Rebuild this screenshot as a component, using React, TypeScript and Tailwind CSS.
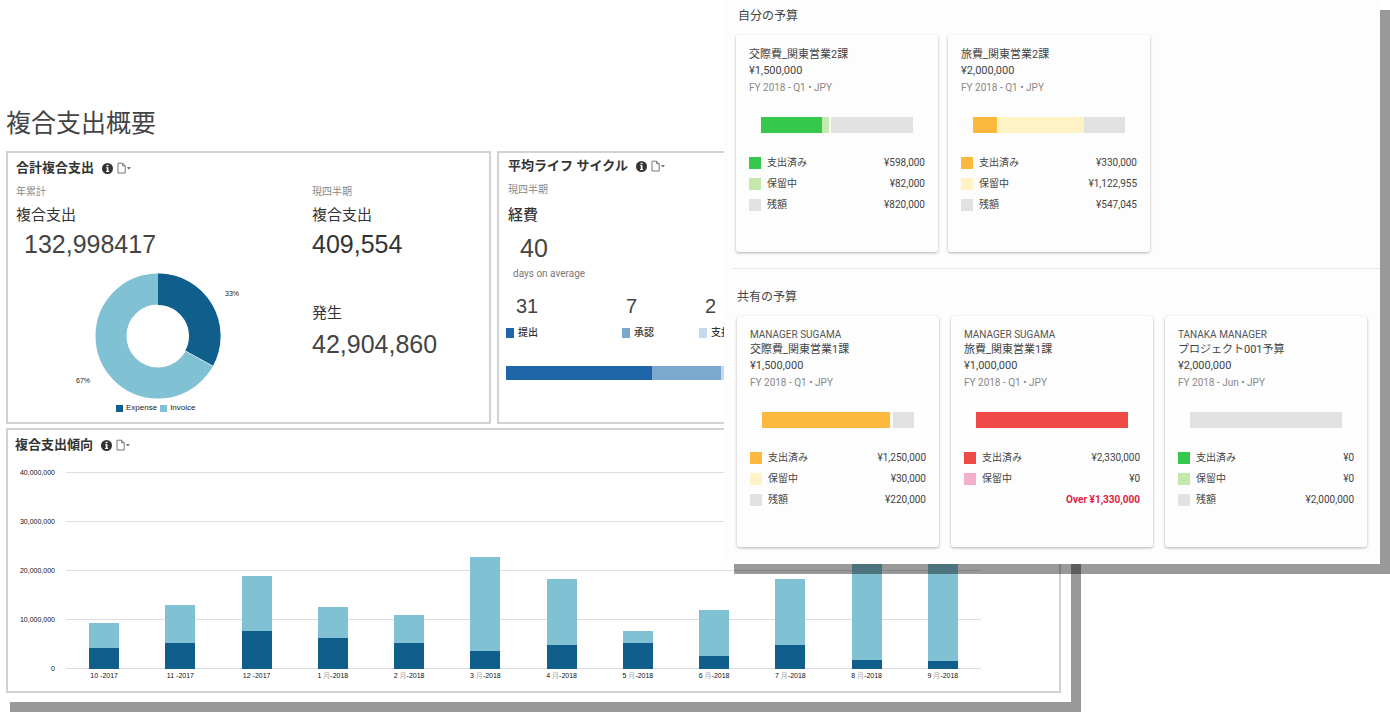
import React from "react";

type Swatch = "green" | "lightGreen" | "orange" | "yellow" | "red" | "pink" | "gray" | "blank";

const swatchClass: Record<Swatch, string> = {
  green: "bg-[#36c84b]",
  lightGreen: "bg-[#c4e9ac]",
  orange: "bg-[#fcb93e]",
  yellow: "bg-[#fdf3c4]",
  red: "bg-[#ee4b48]",
  pink: "bg-[#f4b0cb]",
  gray: "bg-[#e1e1e2]",
  blank: "bg-[#fdfcf4]",
};

interface Budget {
  owner?: string;
  name: string;
  amount: string;
  period: string;
  bar: { color: Swatch; share: number }[];
  rows: { color: Swatch; label: string; value: string }[];
  over?: string;
}

const myBudgets: Budget[] = [
  {
    name: "交際費_関東営業2課",
    amount: "¥1,500,000",
    period: "FY 2018 - Q1 • JPY",
    bar: [
      { color: "green", share: 40 },
      { color: "lightGreen", share: 5 },
      { color: "blank", share: 1 },
      { color: "gray", share: 54 },
    ],
    rows: [
      { color: "green", label: "支出済み", value: "¥598,000" },
      { color: "lightGreen", label: "保留中", value: "¥82,000" },
      { color: "gray", label: "残額", value: "¥820,000" },
    ],
  },
  {
    name: "旅費_関東営業2課",
    amount: "¥2,000,000",
    period: "FY 2018 - Q1 • JPY",
    bar: [
      { color: "orange", share: 16 },
      { color: "yellow", share: 57 },
      { color: "gray", share: 27 },
    ],
    rows: [
      { color: "orange", label: "支出済み", value: "¥330,000" },
      { color: "yellow", label: "保留中", value: "¥1,122,955" },
      { color: "gray", label: "残額", value: "¥547,045" },
    ],
  },
];

const sharedBudgets: Budget[] = [
  {
    owner: "MANAGER SUGAMA",
    name: "交際費_関東営業1課",
    amount: "¥1,500,000",
    period: "FY 2018 - Q1 • JPY",
    bar: [
      { color: "orange", share: 84 },
      { color: "blank", share: 2 },
      { color: "gray", share: 14 },
    ],
    rows: [
      { color: "orange", label: "支出済み", value: "¥1,250,000" },
      { color: "yellow", label: "保留中", value: "¥30,000" },
      { color: "gray", label: "残額", value: "¥220,000" },
    ],
  },
  {
    owner: "MANAGER SUGAMA",
    name: "旅費_関東営業1課",
    amount: "¥1,000,000",
    period: "FY 2018 - Q1 • JPY",
    bar: [{ color: "red", share: 100 }],
    rows: [
      { color: "red", label: "支出済み", value: "¥2,330,000" },
      { color: "pink", label: "保留中", value: "¥0" },
    ],
    over: "Over ¥1,330,000",
  },
  {
    owner: "TANAKA MANAGER",
    name: "プロジェクト001予算",
    amount: "¥2,000,000",
    period: "FY 2018 - Jun • JPY",
    bar: [{ color: "gray", share: 100 }],
    rows: [
      { color: "green", label: "支出済み", value: "¥0" },
      { color: "lightGreen", label: "保留中", value: "¥0" },
      { color: "gray", label: "残額", value: "¥2,000,000" },
    ],
  },
];

// Monthly totals in millions.
const AXIS_MAX = 40;
const months = [
  { month: "10", year: "2017", expense: 4.2, invoice: 5.1 },
  { month: "11", year: "2017", expense: 5.3, invoice: 7.6 },
  { month: "12", year: "2017", expense: 7.7, invoice: 11.1 },
  { month: "1", year: "2018", expense: 6.3, invoice: 6.2 },
  { month: "2", year: "2018", expense: 5.2, invoice: 5.7 },
  { month: "3", year: "2018", expense: 3.6, invoice: 19.2 },
  { month: "4", year: "2018", expense: 4.9, invoice: 13.3 },
  { month: "5", year: "2018", expense: 5.2, invoice: 2.5 },
  { month: "6", year: "2018", expense: 2.7, invoice: 9.3 },
  { month: "7", year: "2018", expense: 4.9, invoice: 13.4 },
  { month: "8", year: "2018", expense: 1.8, invoice: 23.2 },
  { month: "9", year: "2018", expense: 1.7, invoice: 24.3 },
];

function CardTitle({ children }: { children: React.ReactNode }) {
  return (
    <div className="flex items-center gap-2">
      <h2 className="text-[13px] leading-5 font-bold text-[#333]">{children}</h2>
      <div className="flex items-center gap-1">
        <button type="button" aria-label="情報">
          <svg width="11" height="11" viewBox="0 0 11 11" className="block">
            <circle cx="5.5" cy="5.5" r="5.5" fill="#333" />
            <path d="M4.6 1.8h1.9v1.5H4.6zM4.1 4.2h2.4v3.7h.7V9H4V7.9h.8V5.2h-.7z" fill="#fff" />
          </svg>
        </button>
        <button type="button" aria-label="エクスポート">
          <svg width="15" height="12" viewBox="0 0 15 12" className="block">
            <path d="M1 1.2h4.6l2.6 2.6v7.2H1zM5.6 1.2v2.6h2.6" fill="#fff" stroke="#777" strokeWidth="1" />
            <path d="M9.8 5.3h4.2L11.9 7.3z" fill="#555" />
          </svg>
        </button>
      </div>
    </div>
  );
}

function Donut() {
  return (
    <svg width="180" height="128" viewBox="0 0 180 128" className="block" role="img" aria-label="Expense 33%, Invoice 67%">
      <circle cx="88" cy="64" r="47" fill="none" stroke="#80c1d3" strokeWidth="31" />
      <path d="M88 1.5A62.5 62.5 0 0 1 142.8 94.1L115.2 78.9A31 31 0 0 0 88 33z" fill="#0f5e8b" />
      <path d="M142.8 94.1L115.2 78.9" stroke="#d5ebf2" strokeWidth="1" />
      <text x="155" y="24" fontSize="7" fill="#222">33%</text>
      <text x="6" y="111" fontSize="7" fill="#222">67%</text>
    </svg>
  );
}

function StageColumn({ value, label, swatch, indent }: { value: string; label: string; swatch: string; indent: string }) {
  return (
    <div>
      <div className={`text-xl leading-6 text-[#444] ${indent}`}>{value}</div>
      <div className="mt-2 flex items-center gap-1">
        <span className={`h-2.5 w-2 ${swatch}`} />
        <span className="text-[10px] leading-[14px] font-medium text-[#333]">{label}</span>
      </div>
    </div>
  );
}

function TrendChart() {
  return (
    <div className="mt-[17px] mr-[78px] flex">
      <div className="-mt-1 -mb-1.5 flex h-[206px] w-[58px] shrink-0 flex-col justify-between pr-[11px] text-right text-[7px] leading-[10px] text-[#111]">
        <span>40,000,000</span>
        <span>30,000,000</span>
        <span>20,000,000</span>
        <span>10,000,000</span>
        <span>0</span>
      </div>
      <div className="min-w-0 flex-1">
        <div className="relative h-[197px]">
          <div className="absolute inset-0 flex flex-col justify-between">
            {[40, 30, 20, 10, 0].map((tick) => (
              <div key={tick} className="h-px bg-[#dedede]" />
            ))}
          </div>
          <div className="relative flex h-full">
            {months.map((m) => (
              <div key={m.month} className="flex h-full flex-1 flex-col items-center justify-end">
                <div className="w-[30px] bg-[#80c1d3]" style={{ height: `${(m.invoice / AXIS_MAX) * 100}%` }} />
                <div className="w-[30px] bg-[#0f5e8b]" style={{ height: `${(m.expense / AXIS_MAX) * 100}%` }} />
              </div>
            ))}
          </div>
        </div>
        <div className="mt-0.5 flex text-[7px] leading-[10px] text-[#111]">
          {months.map((m) => (
            <div key={m.month} className="flex-1 text-center whitespace-nowrap">
              {m.month} {m.year === "2018" && <span className="text-[#aaa]">月</span>}-{m.year}
            </div>
          ))}
        </div>
      </div>
    </div>
  );
}

function BudgetCard({ budget }: { budget: Budget }) {
  return (
    <article className="w-[202px] rounded-[3px] bg-[#fdfdfd] px-[13px] pt-3 pb-[37px] shadow-[0_1px_3px_rgba(0,0,0,0.3)]">
      {budget.owner && <div className="text-[10px] leading-[14px] text-[#555]">{budget.owner}</div>}
      <h3 className="text-[11px] leading-4 text-[#444]">{budget.name}</h3>
      <div className="text-[11px] leading-4 text-[#444]">{budget.amount}</div>
      <div className="text-[10px] leading-[18px] text-[#888]">{budget.period}</div>
      <div className="mx-3 mt-5 flex h-4">
        {budget.bar.map((part, i) => (
          <div key={i} className={swatchClass[part.color]} style={{ width: `${part.share}%` }} />
        ))}
      </div>
      <div className="mt-[19px] text-[10px] leading-[21px] text-[#444]">
        {budget.rows.map((row) => (
          <div key={row.label} className="flex items-center">
            <span className={`h-3 w-3 ${swatchClass[row.color]}`} />
            <span className="ml-1.5 flex-1">{row.label}</span>
            <span>{row.value}</span>
          </div>
        ))}
        {budget.over && <div className="text-right font-bold text-[#dc2444]">{budget.over}</div>}
      </div>
    </article>
  );
}

export default function App() {
  return (
    <div className="relative min-h-screen bg-white">
      <main className="mr-[319px] bg-white pt-[105px] pr-2.5 pb-[9px] pl-1.5 font-['Liberation_Sans','Noto_Sans_CJK_JP',sans-serif] shadow-[10px_10px_0_rgba(0,0,0,0.4)]">
        <h1 className="text-[25px] leading-9 text-[#444]">複合支出概要</h1>
        <div className="mt-2.5 grid grid-cols-[485fr_564fr] gap-x-1.5 gap-y-1">
          <section className="border-2 border-[#d2d2d2] px-2 pt-[5px] pb-[7px]">
            <CardTitle>合計複合支出</CardTitle>
            <div className="mt-1.5 flex">
              <div className="w-[296px] shrink-0">
                <div className="text-[10px] leading-4 text-[#888]">年累計</div>
                <div className="mt-1 text-[15px] leading-[22px] text-[#333]">複合支出</div>
                <div className="mt-0.5 pl-2 text-[25px] leading-8 text-[#444]">132,998417</div>
                <div className="mt-3 ml-[54px] w-[180px]">
                  <Donut />
                  <div className="mt-px ml-[46px] flex items-center text-[8px] leading-[14px] text-[#222]">
                    <span className="h-[7px] w-[7px] bg-[#0f5e8b]" />
                    <span className="ml-[3px]">Expense</span>
                    <span className="ml-[3px] h-[7px] w-[7px] bg-[#80c1d3]" />
                    <span className="ml-[3px]">Invoice</span>
                  </div>
                </div>
              </div>
              <div>
                <div className="text-[10px] leading-4 text-[#888]">現四半期</div>
                <div className="mt-1 text-[15px] leading-[22px] text-[#333]">複合支出</div>
                <div className="mt-0.5 text-[25px] leading-8 text-[#333]">409,554</div>
                <div className="mt-[42px] text-[15px] leading-[22px] text-[#333]">発生</div>
                <div className="mt-1 text-[25px] leading-8 text-[#444]">42,904,860</div>
              </div>
            </div>
          </section>

          <section className="overflow-hidden border-2 border-[#d2d2d2] px-[7px] pt-[3px]">
            <div className="pl-0.5">
              <CardTitle>平均ライフ サイクル</CardTitle>
              <div className="mt-1.5 text-[10px] leading-4 text-[#888]">現四半期</div>
              <div className="mt-1.5 text-[15px] leading-[22px] font-medium text-[#333]">経費</div>
              <div className="mt-1.5 pl-3 text-[25px] leading-8 text-[#444]">40</div>
              <div className="mt-0.5 pl-[5px] font-[Roboto,sans-serif] text-[10px] leading-4 text-[#777]">days on average</div>
            </div>
            <div className="mt-3 grid grid-cols-[116px_77px_1fr]">
              <StageColumn value="31" label="提出" swatch="bg-[#1c66a8]" indent="pl-2.5" />
              <StageColumn value="7" label="承認" swatch="bg-[#7aa8cf]" indent="pl-1" />
              <StageColumn value="2" label="支払" swatch="bg-[#c3d9ee]" indent="pl-1.5" />
            </div>
            <div className="mt-[26px] flex h-3.5">
              <div className="w-[146px] bg-[#1c66a8]" />
              <div className="w-[69px] bg-[#7aa8cf]" />
              <div className="w-10 bg-[#c3d9ee]" />
            </div>
          </section>

          <section className="col-span-2 border-2 border-[#d2d2d2] pt-[5px] pb-2.5">
            <div className="pl-[7px]">
              <CardTitle>複合支出傾向</CardTitle>
            </div>
            <TrendChart />
          </section>
        </div>
      </main>

      <aside className="absolute top-0 right-2.5 w-[656px] bg-[#fdfdfd] pt-1.5 pb-[17px] font-[Roboto,'Noto_Sans_CJK_JP',sans-serif] shadow-[10px_10px_0_rgba(0,0,0,0.4)]">
        <section className="pb-4 pl-3">
          <h2 className="pl-0.5 text-xs leading-5 text-[#444]">自分の予算</h2>
          <div className="mt-[9px] flex gap-2.5">
            {myBudgets.map((b) => (
              <BudgetCard key={b.name} budget={b} />
            ))}
          </div>
        </section>
        <section className="ml-2 border-t border-[#e8e8e8] pt-[18px] pl-[5px]">
          <h2 className="text-xs leading-5 text-[#444]">共有の予算</h2>
          <div className="mt-[9px] flex gap-3">
            {sharedBudgets.map((b) => (
              <BudgetCard key={b.name} budget={b} />
            ))}
          </div>
        </section>
      </aside>
    </div>
  );
}
